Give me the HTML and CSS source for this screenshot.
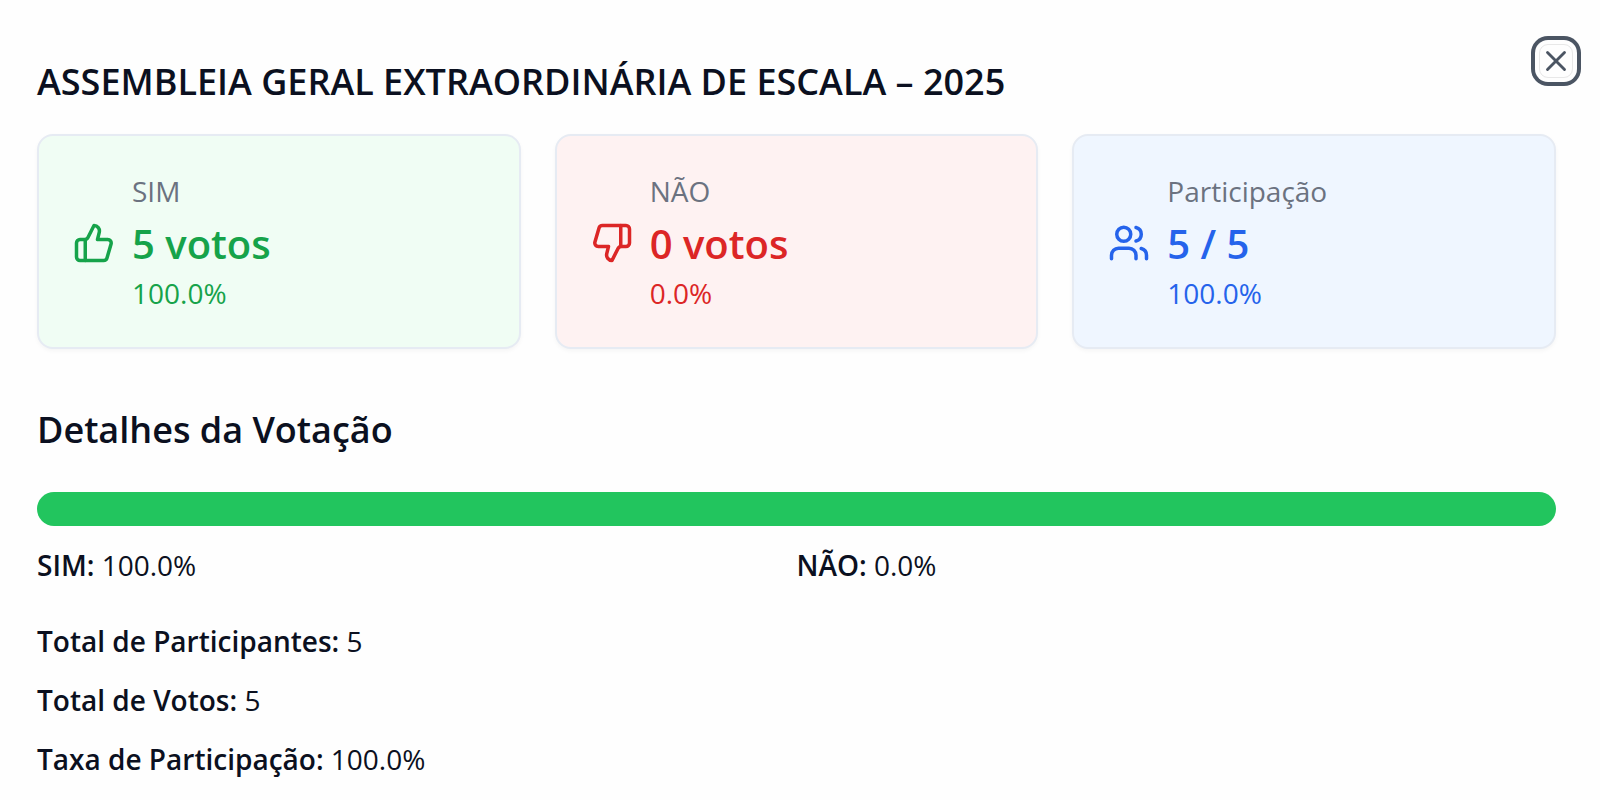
FILE: index.html
```html
<!DOCTYPE html>
<html lang="pt-BR">
  <head>
    <meta charset="UTF-8" />
    <meta name="viewport" content="width=device-width, initial-scale=1.0" />
    <title>Resultado da Votação</title>
    <link rel="stylesheet" href="styles.css">
  </head>
  <body>
    <main class="dialog">
      <button class="close" type="button" aria-label="Fechar">
        <svg class="close-icon" viewBox="0 0 24 24">
          <path d="M18 6 6 18" />
          <path d="m6 6 12 12" />
        </svg>
      </button>

      <h1 class="title">ASSEMBLEIA GERAL EXTRAORDINÁRIA DE ESCALA – 2025</h1>

      <div class="cards">
        <div class="card card-yes">
          <svg class="icon" viewBox="0 0 24 24">
            <path d="M7 10v12" />
            <path d="M15 5.88 14 10h5.83a2 2 0 0 1 1.92 2.56l-2.33 8A2 2 0 0 1 17.5 22H4a2 2 0 0 1-2-2v-8a2 2 0 0 1 2-2h2.76a2 2 0 0 0 1.79-1.11L12 2a3.13 3.13 0 0 1 3 3.88Z" />
          </svg>
          <div>
            <p class="label">SIM</p>
            <p class="value">5 votos</p>
            <p class="percent">100.0%</p>
          </div>
        </div>
        <div class="card card-no">
          <svg class="icon" viewBox="0 0 24 24">
            <path d="M17 14V2" />
            <path d="M9 18.12 10 14H4.17a2 2 0 0 1-1.92-2.56l2.33-8A2 2 0 0 1 6.5 2H20a2 2 0 0 1 2 2v8a2 2 0 0 1-2 2h-2.76a2 2 0 0 0-1.79 1.11L12 22a3.13 3.13 0 0 1-3-3.88Z" />
          </svg>
          <div>
            <p class="label">NÃO</p>
            <p class="value">0 votos</p>
            <p class="percent">0.0%</p>
          </div>
        </div>
        <div class="card card-total">
          <svg class="icon" viewBox="0 0 24 24">
            <path d="M16 21v-2a4 4 0 0 0-4-4H6a4 4 0 0 0-4 4v2" />
            <circle cx="9" cy="7" r="4" />
            <path d="M22 21v-2a4 4 0 0 0-3-3.87" />
            <path d="M16 3.13a4 4 0 0 1 0 7.75" />
          </svg>
          <div>
            <p class="label">Participação</p>
            <p class="value">5 / 5</p>
            <p class="percent">100.0%</p>
          </div>
        </div>
      </div>

      <h2 class="subtitle">Detalhes da Votação</h2>
      <div class="bar">
        <div class="bar-fill" style="width: 100%"></div>
      </div>
      <div class="split">
        <p><strong>SIM:</strong> 100.0%</p>
        <p><strong>NÃO:</strong> 0.0%</p>
      </div>
      <div class="totals">
        <p><strong>Total de Participantes:</strong> 5</p>
        <p><strong>Total de Votos:</strong> 5</p>
        <p><strong>Taxa de Participação:</strong> 100.0%</p>
      </div>
    </main>
  </body>
</html>
```
FILE: styles.css
```css
* {
  box-sizing: border-box;
  margin: 0;
  padding: 0;
}
body {
  background: #fefefe;
  color: #0b1020;
  font-family: "Segoe UI", "Open Sans", "Noto Sans", sans-serif;
  font-size: 28px;
  line-height: 43px;
}
strong {
  font-weight: 600;
}
.dialog {
  position: relative;
  padding: 60px 44px 0 37px;
}
.title {
  font-size: 36px;
  font-weight: 600;
  line-height: 43px;
}

/* close button with its focus ring */
.close {
  position: absolute;
  top: 44px;
  right: 27px;
  width: 34px;
  height: 34px;
  display: flex;
  align-items: center;
  justify-content: center;
  background: #fefefe;
  border: 1px solid #e8e8e8;
  border-radius: 9px;
  box-shadow: 0 0 0 4px #fefefe, 0 0 0 8px #4b5563;
  color: #4b5563;
  cursor: pointer;
}
.close-icon {
  flex: none;
  width: 34px;
  height: 34px;
}

svg {
  fill: none;
  stroke: currentColor;
  stroke-width: 2;
  stroke-linecap: round;
  stroke-linejoin: round;
}

.cards {
  display: grid;
  grid-template-columns: repeat(3, 1fr);
  gap: 34px;
  margin-top: 31px;
}
.card {
  display: flex;
  align-items: center;
  gap: 17px;
  padding: 34px 34px 32px;
  border: 2px solid #e6ebf3;
  border-radius: 16px;
  box-shadow: 0 2px 4px rgba(0, 0, 0, 0.04);
}
.icon {
  flex: none;
  width: 42px;
  height: 42px;
}
.label {
  color: #6b7280;
}
.value {
  margin-top: 3px;
  font-size: 40px;
  font-weight: 600;
  line-height: 56px;
}
.card-yes {
  background: #f0fdf4;
  color: #16a34a;
}
.card-no {
  background: #fef2f2;
  color: #dc2626;
}
.card-total {
  background: #eff6ff;
  color: #2563eb;
}

.subtitle {
  margin-top: 53px;
  font-size: 36px;
  font-weight: 600;
  line-height: 56px;
}
.bar {
  height: 34px;
  margin-top: 34px;
  background: #e5e7eb;
  border-radius: 17px;
  overflow: hidden;
}
.bar-fill {
  height: 100%;
  background: #22c55e;
}
.split {
  display: grid;
  grid-template-columns: 1fr 1fr;
  margin-top: 18px;
}
.totals {
  display: flex;
  flex-direction: column;
  gap: 16px;
  margin-top: 33px;
}
```
